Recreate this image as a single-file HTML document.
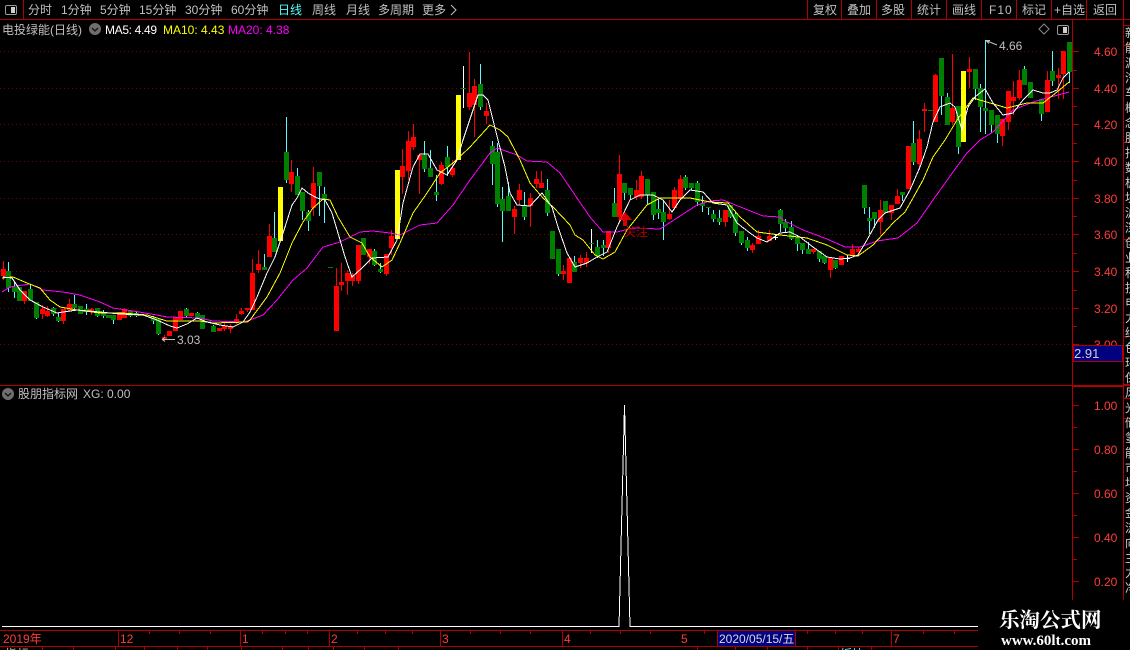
<!DOCTYPE html>
<html lang="zh">
<head>
<meta charset="utf-8">
<title>电投绿能</title>
<style>
html,body{margin:0;padding:0;background:#000;width:1130px;height:650px;overflow:hidden}
svg{position:absolute;left:0;top:0;display:block}
text{font-family:"Liberation Sans","Noto Sans CJK SC",sans-serif;font-size:12px}
.t{fill:#c0c0c0}
.a{fill:#ff3c3c}
#side{position:absolute;left:1125px;top:26px;width:5px;height:570px;overflow:hidden;color:#ccc;font:12px/15px "Liberation Sans","Noto Sans CJK SC",sans-serif;white-space:pre}
</style>
</head>
<body>
<svg width="1130" height="650" viewBox="0 0 1130 650">
<!-- grid -->
<g stroke="#780000" stroke-width="1" stroke-dasharray="1 3" shape-rendering="crispEdges">
<path d="M0 51.5H1072M0 88.5H1072M0 124.5H1072M0 161.5H1072M0 198.5H1072M0 234.5H1072M0 271.5H1072M0 308.5H1072M0 344.5H1072"/>
</g>
<!-- wicks -->
<path shape-rendering="crispEdges" stroke="#ff0000" fill="none" d="M3.5 261V280M24.5 291V304M42.5 305V319M47.5 306V317M63.5 309V324M69.5 299V312M91.5 308V315M119.5 312V320M124.5 308V318M164.5 335V341M224.5 322V331M230.5 324V333M236.5 314V324M241.5 308V315M247.5 308V312M252.5 259V310M258.5 250V273M269.5 224V257M291.5 160V192M313.5 167V216M336.5 268V331M341.5 263V291M347.5 270V295M352.5 273V286M358.5 245V284M369.5 249V264M386.5 254V276M391.5 230V255M402.5 149V194M408.5 131V180M413.5 124V150M419.5 155V194M441.5 162V185M452.5 160V177M469.5 52V110M474.5 79V137M486.5 103V124M514.5 206V234M519.5 184V205M530.5 193V227M536.5 171V188M541.5 171V188M563.5 265V280M580.5 255V268M586.5 252V267M608.5 231V253M619.5 155V221M636.5 180V200M641.5 171V199M669.5 200V220M674.5 187V210M680.5 175V199M725.5 210V227M752.5 243V253M758.5 230V244M769.5 230V241M813.5 249V254M830.5 258V278M852.5 244V256M858.5 247V256M880.5 200V234M891.5 205V220M897.5 189V204M919.5 130V170M924.5 103V132M935.5 74V122M952.5 54V125M969.5 57V88M1002.5 119V146M1008.5 91V130M1013.5 81V115M1019.5 70V100M1047.5 71V112M1058.5 68V99M1063.5 51V99"/>
<path shape-rendering="crispEdges" stroke="#54fcfc" fill="none" d="M8.5 262V292M14.5 282V298M30.5 284V301M36.5 302V319M53.5 307V316M58.5 313V322M74.5 295V310M86.5 304V315M97.5 308V317M103.5 310V318M113.5 315V324M130.5 310V317M136.5 312V317M153.5 316V324M158.5 319V335M186.5 308V317M197.5 312V319M213.5 325V332M264.5 254V270M274.5 212V252M286.5 117V183M297.5 168V195M302.5 192V220M308.5 210V231M319.5 172V216M324.5 187V223M374.5 249V266M380.5 263V273M424.5 141V172M430.5 150V177M436.5 175V201M447.5 146V176M480.5 64V110M492.5 141V185M497.5 143V207M502.5 187V242M508.5 182V211M524.5 192V220M547.5 179V216M558.5 249V276M574.5 256V272M597.5 240V258M603.5 240V256M614.5 188V217M624.5 183V200M630.5 188V200M647.5 179V205M653.5 192V220M658.5 199V219M663.5 200V240M685.5 175V190M691.5 183V190M697.5 181V206M702.5 196V212M708.5 207V215M713.5 210V222M719.5 210V225M730.5 205V218M735.5 211V236M741.5 231V245M747.5 237V251M780.5 209V232M785.5 219V232M791.5 221V240M797.5 235V251M802.5 243V254M808.5 242V254M819.5 251V262M824.5 256V264M835.5 260V269M864.5 185V214M869.5 207V234M874.5 212V228M902.5 192V201M913.5 121V165M941.5 58V115M947.5 93V125M958.5 106V154M975.5 69V100M980.5 84V132M985.5 40V134M991.5 110V133M997.5 115V143M1024.5 66V85M1041.5 99V121M1052.5 51V86M1069.5 42V83"/>
<path shape-rendering="crispEdges" stroke="#ffffff" fill="none" d="M463.5 66V108M591.5 229V253M775.5 235V240M773 237.5H778M847.5 255V262M845 258.5H850"/>
<!-- green bodies -->
<path shape-rendering="crispEdges" fill="#008000" d="M6 271h5v17h-5zM12 287h5v5h-5zM17 287h5v14h-5zM28 289h5v12h-5zM34 302h5v16h-5zM51 308h5v6h-5zM56 317h5v4h-5zM72 304h5v4h-5zM78 306h5v8h-5zM84 309h5v3h-5zM95 308h5v8h-5zM101 313h5v3h-5zM106 315h5v3h-5zM111 315h5v5h-5zM128 311h5v5h-5zM134 313h5v3h-5zM151 317h5v4h-5zM156 319h5v15h-5zM184 309h5v7h-5zM195 313h5v5h-5zM200 315h5v14h-5zM206 321h5v1h-5zM211 326h5v6h-5zM262 267h5v3h-5zM272 238h5v14h-5zM284 152h5v28h-5zM295 176h5v19h-5zM300 192h5v19h-5zM306 212h5v9h-5zM317 172h5v14h-5zM322 194h5v5h-5zM328 267h5v1h-5zM361 238h5v17h-5zM372 251h5v14h-5zM378 269h5v3h-5zM422 155h5v14h-5zM428 168h5v9h-5zM434 192h5v3h-5zM445 157h5v10h-5zM478 84h5v23h-5zM490 146h5v18h-5zM495 152h5v52h-5zM500 199h5v12h-5zM506 196h5v15h-5zM522 205h5v12h-5zM545 190h5v23h-5zM550 231h5v28h-5zM556 249h5v25h-5zM572 262h5v10h-5zM595 247h5v9h-5zM601 245h5v3h-5zM612 203h5v14h-5zM622 183h5v10h-5zM628 188h5v7h-5zM645 179h5v16h-5zM651 192h5v23h-5zM656 209h5v4h-5zM661 212h5v10h-5zM683 177h5v11h-5zM689 183h5v5h-5zM695 183h5v19h-5zM700 203h5v3h-5zM706 207h5v1h-5zM711 214h5v5h-5zM717 218h5v4h-5zM728 205h5v12h-5zM733 214h5v19h-5zM739 231h5v12h-5zM745 240h5v8h-5zM778 210h5v14h-5zM783 222h5v6h-5zM789 227h5v12h-5zM795 237h5v7h-5zM800 243h5v7h-5zM806 249h5v5h-5zM817 251h5v8h-5zM822 256h5v7h-5zM833 260h5v8h-5zM862 185h5v23h-5zM867 218h5v3h-5zM872 212h5v7h-5zM883 201h5v12h-5zM900 192h5v3h-5zM911 143h5v19h-5zM928 110h5v1h-5zM939 58h5v38h-5zM945 97h5v28h-5zM956 106h5v41h-5zM973 69h5v20h-5zM978 88h5v19h-5zM983 108h5v3h-5zM989 110h5v15h-5zM995 115h5v19h-5zM1022 69h5v16h-5zM1028 82h5v16h-5zM1039 99h5v15h-5zM1050 71h5v10h-5zM1067 42h5v30h-5zM461 88h5v1h-5zM589 243h5v1h-5z"/>
<!-- red bodies -->
<path shape-rendering="crispEdges" fill="#ff0000" d="M1 269h5v7h-5zM22 291h5v10h-5zM40 309h5v5h-5zM45 311h5v5h-5zM61 309h5v12h-5zM67 304h5v6h-5zM89 309h5v3h-5zM117 312h5v8h-5zM122 309h5v9h-5zM162 337h5v3h-5zM167 331h5v5h-5zM173 317h5v14h-5zM178 311h5v9h-5zM189 313h5v3h-5zM217 328h5v3h-5zM222 326h5v3h-5zM228 326h5v3h-5zM234 319h5v4h-5zM239 311h5v3h-5zM245 308h5v2h-5zM250 273h5v37h-5zM256 264h5v6h-5zM267 236h5v21h-5zM289 172h5v12h-5zM311 183h5v25h-5zM334 286h5v45h-5zM339 282h5v3h-5zM345 273h5v8h-5zM350 275h5v6h-5zM356 245h5v36h-5zM367 249h5v8h-5zM384 254h5v20h-5zM389 236h5v12h-5zM400 166h5v11h-5zM406 141h5v30h-5zM411 137h5v10h-5zM417 155h5v5h-5zM439 165h5v19h-5zM450 168h5v7h-5zM467 93h5v14h-5zM472 86h5v19h-5zM484 111h5v5h-5zM512 209h5v8h-5zM517 190h5v10h-5zM528 198h5v8h-5zM534 179h5v5h-5zM539 183h5v5h-5zM561 271h5v3h-5zM567 258h5v25h-5zM578 258h5v5h-5zM584 258h5v5h-5zM606 231h5v17h-5zM617 174h5v43h-5zM634 190h5v7h-5zM639 176h5v21h-5zM667 214h5v5h-5zM672 190h5v18h-5zM678 179h5v20h-5zM723 210h5v12h-5zM750 245h5v5h-5zM756 236h5v8h-5zM767 236h5v5h-5zM811 249h5v3h-5zM828 258h5v12h-5zM839 256h5v9h-5zM850 249h5v6h-5zM856 249h5v3h-5zM878 210h5v12h-5zM889 205h5v8h-5zM895 196h5v8h-5zM906 146h5v43h-5zM917 139h5v25h-5zM922 109h5v2h-5zM933 75h5v47h-5zM950 108h5v14h-5zM967 69h5v3h-5zM1000 119h5v17h-5zM1006 91h5v31h-5zM1011 97h5v4h-5zM1017 80h5v18h-5zM1045 80h5v32h-5zM1056 75h5v3h-5zM1061 51h5v23h-5z"/>
<!-- yellow bodies -->
<path shape-rendering="crispEdges" fill="#ffff00" d="M278 187h5v54h-5zM395 170h5v69h-5zM456 95h5v65h-5zM961 71h5v71h-5z"/>
<!-- MA lines -->
<polyline fill="none" stroke="#ff00ff" stroke-width="1" shape-rendering="crispEdges" points="2,292 10,287 30,284 43,290 63,292 80,295 100,302 113,308 133,311 157,315 167,317 200,318 213,321 243,322 250,320 263,315 277,300 293,280 307,268 323,247 340,242 360,232 373,231 390,233 400,235 420,225 437,223 453,205 470,180 490,153 497,148 517,155 527,161 547,162 560,173 577,198 590,217 603,232 617,232 633,228 660,229 677,218 697,205 710,201 723,200 743,208 763,216 780,217 783,220 803,230 827,239 845,247 860,247 877,241 898,238 917,223 933,200 953,172 967,153 980,140 993,132 1013,110 1033,102 1047,98 1069,92"/>
<polyline fill="none" stroke="#ffff00" stroke-width="1" shape-rendering="crispEdges" points="2,278 13,277 27,283 40,288 50,300 60,307 77,310 100,313 122,313 147,315 167,321 200,321 213,323 247,322 250,320 267,297 280,273 292,243 303,222 313,208 323,199 330,200 338,217 350,237 362,243 370,257 382,267 392,260 400,243 413,213 427,193 440,173 453,163 470,147 490,125 500,130 508,137 520,160 530,183 543,198 553,207 570,225 575,235 583,240 595,255 603,259 615,252 627,230 647,205 660,198 690,198 710,202 728,203 740,217 757,232 780,235 807,238 827,245 847,255 858,256 873,245 893,223 905,212 913,198 923,180 933,157 945,140 957,120 973,98 990,103 1007,108 1027,103 1043,103 1057,92 1069,82"/>
<polyline fill="none" stroke="#ffffff" stroke-width="1" shape-rendering="crispEdges" points="3,277 12,278 20,290 30,300 43,307 57,313 63,312 77,310 100,312 120,314 143,315 157,320 170,326 177,328 187,324 197,318 207,322 220,325 233,327 243,322 250,312 257,297 267,273 275,257 285,227 292,205 297,198 302,188 308,193 317,198 325,200 332,213 338,233 345,257 352,277 362,268 372,258 388,257 397,240 403,203 413,167 420,154 428,154 437,170 447,175 457,160 463,140 468,125 473,110 478,95 483,95 488,100 493,120 498,140 505,167 510,193 517,205 530,206 542,193 552,207 558,227 567,253 575,267 587,263 597,257 607,252 617,227 630,200 640,195 653,195 663,200 672,212 680,200 690,190 703,192 713,203 727,205 737,223 750,233 757,238 767,242 780,233 790,232 800,237 813,247 827,257 840,259 850,258 858,255 867,240 878,220 885,213 900,208 910,190 920,167 927,147 933,122 940,107 950,103 955,107 962,130 968,107 975,97 985,89 993,103 1003,115 1013,113 1023,100 1033,90 1043,93 1050,93 1057,90 1063,78 1069,72"/>
<!-- signal marker -->
<path fill="#ff0000" d="M625 212L618 220H623V226H627V220H632Z" opacity=".85"/>
<text x="624" y="236" fill="#b00000" style="font-size:12px">关注</text>
<!-- price notes -->
<path fill="none" stroke="#c0c0c0" d="M162 339.5H175M162 339.5l3-2M162 339.5l3 2M986 40.5L997 45M986 40.5h4M986 40.5l3 3"/>
<text x="177" y="344" class="t">3.03</text>
<text x="999" y="50" class="t">4.66</text>
<!-- top icons -->
<path fill="none" stroke="#8a8a8a" d="M1044 24l5 5-5 5-5-5z"/>
<rect x="1057.5" y="25.5" width="11" height="9" rx="1.5" fill="none" stroke="#9a9a9a"/>
<rect x="1063" y="27" width="4" height="6" fill="#cfcfcf"/>
<rect x="5.5" y="5.5" width="11" height="9" rx="1.5" fill="none" stroke="#9a9a9a"/>
<rect x="11" y="7" width="4" height="6" fill="#cfcfcf"/>
<!-- frame lines -->
<g shape-rendering="crispEdges" fill="#b00000">
<rect x="0" y="19" width="1130" height="1"/>
<rect x="23" y="0" width="1" height="19"/>
<rect x="807" y="0" width="1" height="19"/><rect x="841" y="0" width="1" height="19"/><rect x="876" y="0" width="1" height="19"/><rect x="911" y="0" width="1" height="19"/><rect x="946" y="0" width="1" height="19"/><rect x="981" y="0" width="1" height="19"/><rect x="1016" y="0" width="1" height="19"/><rect x="1051" y="0" width="1" height="19"/><rect x="1086" y="0" width="1" height="19"/><rect x="1123" y="0" width="1" height="600"/>
<rect x="1072" y="20" width="1" height="580"/>
<rect x="0" y="385" width="1130" height="1"/>
<rect x="1073" y="385" width="50" height="2"/>
<rect x="1124" y="25" width="6" height="1"/><rect x="1124" y="45" width="6" height="1"/><rect x="1124" y="142" width="6" height="1"/><rect x="1124" y="239" width="6" height="1"/><rect x="1124" y="336" width="6" height="1"/><rect x="1124" y="384" width="6" height="1"/><rect x="1124" y="398" width="6" height="1"/><rect x="1124" y="418" width="6" height="1"/>
<!-- axis ticks -->
<rect x="1073" y="51" width="6" height="1"/><rect x="1073" y="70" width="4" height="1"/><rect x="1073" y="88" width="6" height="1"/><rect x="1073" y="106" width="4" height="1"/><rect x="1073" y="124" width="6" height="1"/><rect x="1073" y="143" width="4" height="1"/><rect x="1073" y="161" width="6" height="1"/><rect x="1073" y="180" width="4" height="1"/><rect x="1073" y="198" width="6" height="1"/><rect x="1073" y="216" width="4" height="1"/><rect x="1073" y="234" width="6" height="1"/><rect x="1073" y="253" width="4" height="1"/><rect x="1073" y="271" width="6" height="1"/><rect x="1073" y="290" width="4" height="1"/><rect x="1073" y="308" width="6" height="1"/><rect x="1073" y="326" width="4" height="1"/><rect x="1073" y="344" width="6" height="1"/>
<rect x="1073" y="405" width="6" height="1"/><rect x="1073" y="427" width="4" height="1"/><rect x="1073" y="449" width="6" height="1"/><rect x="1073" y="471" width="4" height="1"/><rect x="1073" y="493" width="6" height="1"/><rect x="1073" y="515" width="4" height="1"/><rect x="1073" y="537" width="6" height="1"/><rect x="1073" y="559" width="4" height="1"/><rect x="1073" y="581" width="6" height="1"/>
<!-- date axis -->
<rect x="0" y="630" width="978" height="1"/><rect x="0" y="646" width="978" height="1"/>
<rect x="118" y="631" width="1" height="15"/><rect x="240" y="631" width="1" height="15"/><rect x="329" y="631" width="1" height="15"/><rect x="440" y="631" width="1" height="15"/><rect x="562" y="631" width="1" height="15"/><rect x="891" y="631" width="1" height="15"/>
<rect x="149" y="631" width="1" height="3"/><rect x="179" y="631" width="1" height="3"/><rect x="210" y="631" width="1" height="3"/><rect x="262" y="631" width="1" height="3"/><rect x="285" y="631" width="1" height="3"/><rect x="307" y="631" width="1" height="3"/><rect x="357" y="631" width="1" height="3"/><rect x="385" y="631" width="1" height="3"/><rect x="412" y="631" width="1" height="3"/><rect x="470" y="631" width="1" height="3"/><rect x="500" y="631" width="1" height="3"/><rect x="530" y="631" width="1" height="3"/><rect x="590" y="631" width="1" height="3"/><rect x="620" y="631" width="1" height="3"/><rect x="650" y="631" width="1" height="3"/><rect x="704" y="631" width="1" height="3"/><rect x="807" y="631" width="1" height="3"/><rect x="835" y="631" width="1" height="3"/><rect x="862" y="631" width="1" height="3"/><rect x="923" y="631" width="1" height="3"/><rect x="954" y="631" width="1" height="3"/>
<!-- status strip -->
<rect x="42" y="647" width="1" height="3"/><rect x="73" y="647" width="1" height="3"/><rect x="115" y="647" width="1" height="3"/><rect x="144" y="647" width="1" height="3"/><rect x="177" y="647" width="1" height="3"/><rect x="207" y="647" width="1" height="3"/><rect x="241" y="647" width="1" height="3"/><rect x="282" y="647" width="1" height="3"/><rect x="308" y="647" width="1" height="3"/><rect x="333" y="647" width="1" height="3"/><rect x="364" y="647" width="1" height="3"/><rect x="398" y="647" width="1" height="3"/><rect x="697" y="647" width="1" height="3"/><rect x="735" y="647" width="1" height="3"/><rect x="767" y="647" width="1" height="3"/><rect x="807" y="647" width="1" height="3"/><rect x="838" y="647" width="1" height="3"/><rect x="871" y="647" width="1" height="3"/>
</g>
<text x="5" y="658" class="t">指标</text>
<text x="840" y="658" fill="#54fcfc">板块</text>
<!-- lower chart -->
<path fill="none" stroke="#fff" stroke-width="1" shape-rendering="crispEdges" d="M2 626.5H619L624.5 405L630 626.5H978"/>
<!-- toolbar text -->
<text x="28" y="14" class="t">分时</text>
<text x="61" y="14" class="t">1分钟</text>
<text x="100" y="14" class="t">5分钟</text>
<text x="139" y="14" class="t">15分钟</text>
<text x="185" y="14" class="t">30分钟</text>
<text x="231" y="14" class="t">60分钟</text>
<text x="278" y="14" fill="#54fcfc">日线</text>
<text x="312" y="14" class="t">周线</text>
<text x="346" y="14" class="t">月线</text>
<text x="378" y="14" class="t">多周期</text>
<text x="422" y="14" class="t">更多</text>
<path fill="none" stroke="#c0c0c0" d="M451 5l5 5-5 5"/>
<text x="813" y="14" class="t">复权</text>
<text x="847" y="14" class="t">叠加</text>
<text x="881" y="14" class="t">多股</text>
<text x="917" y="14" class="t">统计</text>
<text x="952" y="14" class="t">画线</text>
<text x="989" y="14" class="t" letter-spacing="1">F10</text>
<text x="1022" y="14" class="t">标记</text>
<text x="1054" y="14" class="t">+自选</text>
<text x="1093" y="14" class="t">返回</text>
<!-- title row -->
<text x="2" y="34" class="t">电投绿能(日线)</text>
<circle cx="95" cy="29" r="6" fill="#6e6e6e"/>
<path fill="none" stroke="#111" stroke-width="1.3" d="M92 28l3 3 3-3"/>
<text x="105" y="34" fill="#fff" textLength="52">MA5: 4.49</text>
<text x="163" y="34" fill="#ff0">MA10: 4.43</text>
<text x="228" y="34" fill="#f0f">MA20: 4.38</text>
<!-- axis labels -->
<g class="a">
<text x="1094" y="56" class="a">4.60</text>
<text x="1094" y="93" class="a">4.40</text>
<text x="1094" y="129" class="a">4.20</text>
<text x="1094" y="166" class="a">4.00</text>
<text x="1094" y="203" class="a">3.80</text>
<text x="1094" y="239" class="a">3.60</text>
<text x="1094" y="276" class="a">3.40</text>
<text x="1094" y="313" class="a">3.20</text>
<text x="1094" y="349" class="a">3.00</text>
<text x="1094" y="410" class="a">1.00</text>
<text x="1094" y="454" class="a">0.80</text>
<text x="1094" y="498" class="a">0.60</text>
<text x="1094" y="542" class="a">0.40</text>
<text x="1094" y="586" class="a">0.20</text>
</g>
<rect x="1073.5" y="345.5" width="49" height="16" fill="#000080" stroke="#b00000"/>
<text x="1074" y="358" fill="#d0d0d0" style="font-size:13px">2.91</text>
<!-- indicator title -->
<circle cx="8" cy="394" r="6" fill="#6e6e6e"/>
<path fill="none" stroke="#111" stroke-width="1.3" d="M5 393l3 3 3-3"/>
<text x="18" y="398" class="t">股朋指标网</text>
<text x="83" y="398" class="t">XG: 0.00</text>
<!-- date labels -->
<text x="3" y="643" class="a">2019年</text>
<text x="120" y="643" class="a">12</text>
<text x="242" y="643" class="a">1</text>
<text x="331" y="643" class="a">2</text>
<text x="442" y="643" class="a">3</text>
<text x="564" y="643" class="a">4</text>
<text x="681" y="643" class="a">5</text>
<rect x="717.5" y="630.5" width="78" height="16" fill="#000080" stroke="#b00000"/>
<text x="719" y="643" fill="#d8d8d8">2020/05/15/五</text>
<text x="893" y="643" class="a">7</text>
<!-- watermark -->
<rect x="978" y="600" width="152" height="50" fill="#000"/>
<text x="999" y="627" fill="#fff" style="font-family:'Noto Serif CJK SC','Liberation Serif',serif;font-size:20.5px;font-weight:700">乐淘公式网</text>
<text x="1001" y="645" fill="#fff" style="font-family:'Liberation Serif',serif;font-size:15px;font-weight:700">www.60lt.com</text>
</svg>
<div id="side">新
能
源
汽
车
概
念
股
指
数
板
块
沪
深
创
业
科
技
电
力
绿
色
环
保
风
光
储
氢
能
市
场
资
金
流
向
主
力
净
额</div>
</body>
</html>
